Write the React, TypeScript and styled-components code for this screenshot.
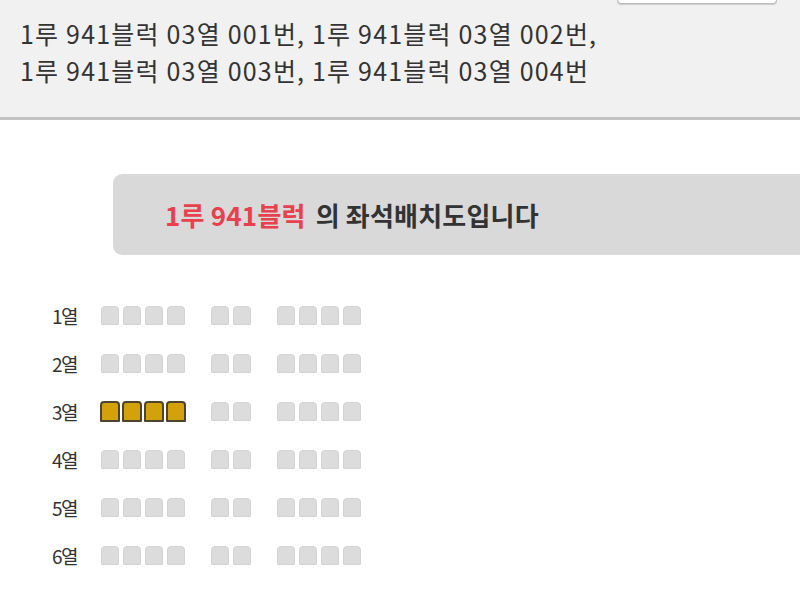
import { createGlobalStyle } from "styled-components";
import styled from "styled-components";

const GlobalStyle = createGlobalStyle`
  html, body {
    margin: 0;
    padding: 0;
    background: #ffffff;
    overflow: hidden;
  }
  body {
    font-family: "Noto Sans CJK KR", "Noto Sans", sans-serif;
  }
`;

const Page = styled.div`
  width: 800px;
  height: 596px;
  background: #ffffff;
  overflow: hidden;
`;

const SelectedPanel = styled.div`
  background: #f1f1f1;
  height: 117px;
  border-bottom: 3px solid #c2c2c2;
  box-sizing: content-box;
  display: flex;
  flex-direction: column;
`;

const ButtonRow = styled.div`
  height: 4px;
  display: flex;
  justify-content: flex-end;
  padding-right: 23px;
`;

const TopButton = styled.button`
  width: 160px;
  height: 30px;
  margin-top: -26px;
  background: #ffffff;
  border: 1px solid #bcbcbc;
  border-radius: 0 0 4px 4px;
  box-shadow: 0 1px 1px rgba(0, 0, 0, 0.15);
`;

const SeatList = styled.div`
  padding: 11px 0 0 20px;
  font-size: 25px;
  line-height: 37px;
  color: #333333;
  letter-spacing: 1.2px;
`;

const Banner = styled.div`
  margin: 54px 0 0 113px;
  height: 81px;
  background: #d9d9d9;
  border-radius: 9px 0 0 9px;
  display: flex;
  align-items: center;
  padding-left: 52px;
  font-size: 26px;
  font-weight: 700;
  color: #333333;
  letter-spacing: 0.2px;
`;

const Highlight = styled.span`
  color: #e8404c;
  margin-right: 10px;
`;

const Grid = styled.div`
  margin: 50px 0 0 52px;
  display: flex;
  flex-direction: column;
  gap: 28px;
`;

const Row = styled.div`
  display: flex;
  align-items: center;
  height: 20px;
`;

const RowLabel = styled.span`
  width: 49px;
  font-size: 19px;
  color: #333333;
  letter-spacing: -1.5px;
`;

const Block = styled.div`
  display: flex;
  gap: 4px;
  margin-right: 26px;
`;

const Seat = styled.div<{ $taken?: boolean }>`
  width: 16px;
  height: 17px;
  border-radius: 4px 4px 1px 1px;
  background: ${(p) => (p.$taken ? "#d3a20a" : "#dcdcdc")};
  border: ${(p) => (p.$taken ? "2px solid #4d4430" : "1px solid #d3d3d3")};
  box-sizing: content-box;
  margin: ${(p) => (p.$taken ? "-1px" : "0")};
`;

const rows = [1, 2, 3, 4, 5, 6];
const blocks = [4, 2, 4];

export default function App() {
  return (
    <Page>
      <GlobalStyle />
      <SelectedPanel>
        <ButtonRow>
          <TopButton />
        </ButtonRow>
        <SeatList>
          1루 941블럭 03열 001번, 1루 941블럭 03열 002번,
          <br />
          1루 941블럭 03열 003번, 1루 941블럭 03열 004번
        </SeatList>
      </SelectedPanel>
      <Banner>
        <Highlight>1루 941블럭</Highlight>의 좌석배치도입니다
      </Banner>
      <Grid>
        {rows.map((r) => (
          <Row key={r}>
            <RowLabel>{r}열</RowLabel>
            {blocks.map((count, bi) => (
              <Block key={bi}>
                {Array.from({ length: count }).map((_, si) => (
                  <Seat key={si} $taken={r === 3 && bi === 0} />
                ))}
              </Block>
            ))}
          </Row>
        ))}
      </Grid>
    </Page>
  );
}
